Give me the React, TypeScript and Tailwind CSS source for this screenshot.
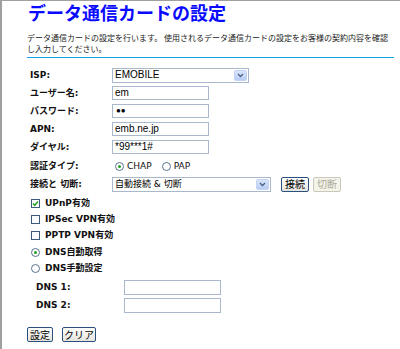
import React from "react";

const F = "font-['DejaVu_Sans','Noto_Sans_CJK_JP',sans-serif]";
const FA = "font-['Liberation_Sans','Noto_Sans_CJK_JP',sans-serif]";

function Label({ children, w = "w-[82px]" }: { children: React.ReactNode; w?: string }) {
  return <div className={`${w} shrink-0 font-bold text-[9px] leading-none text-[#111]`}>{children}</div>;
}

function TextBox({ value, w = "w-[97px]", h = "h-[14px]" }: { value?: React.ReactNode; w?: string; h?: string }) {
  return (
    <div className={`${w} ${h} border border-[#a9b8cc] bg-white pl-[2px] flex items-center text-[10px] leading-none text-black ${FA}`}>
      {value}
    </div>
  );
}

function Chevron() {
  return (
    <div className="absolute right-[1px] top-[1px] bottom-[1px] w-[13px] rounded-[2px] bg-[linear-gradient(#d8e4fb,#b9cdf4)] border border-[#c3d3f3] flex items-center justify-center">
      <svg width="7" height="5" viewBox="0 0 7 5">
        <path d="M1 1 L3.5 3.5 L6 1" fill="none" stroke="#4d6185" strokeWidth="1.3" />
      </svg>
    </div>
  );
}

function Select({ value, w, cls = "" }: { value: string; w: string; cls?: string }) {
  return (
    <div className={`relative ${w} h-[15px] border border-[#a9b8cc] bg-white pl-[2px] flex items-center leading-none text-black ${cls}`}>
      {value}
      <Chevron />
    </div>
  );
}

function Radio({ on }: { on?: boolean }) {
  return (
    <div className="w-[9px] h-[9px] rounded-full border border-[#5a7390] bg-white flex items-center justify-center shrink-0">
      {on && <div className="w-[3px] h-[3px] rounded-full bg-[#21a121]" />}
    </div>
  );
}

function Check({ on }: { on?: boolean }) {
  return (
    <div className="w-[9px] h-[9px] border border-[#3d5a7f] bg-white flex items-center justify-center shrink-0">
      {on && (
        <svg width="7" height="7" viewBox="0 0 7 7">
          <path d="M1 3.5 L2.8 5.3 L6 1.5" fill="none" stroke="#21a121" strokeWidth="1.5" />
        </svg>
      )}
    </div>
  );
}

function Btn({ children, w, disabled }: { children: React.ReactNode; w: string; disabled?: boolean }) {
  return (
    <div
      className={`${w} h-[15px] rounded-[2px] border flex items-center justify-center text-[10px] leading-none ${
        disabled
          ? "border-[#cac8bb] text-[#aca899] bg-[#f5f4ea]"
          : "border-[#2b4f7e] text-black bg-[linear-gradient(#ffffff,#e4e3dc)]"
      }`}
    >
      {children}
    </div>
  );
}

export default function App() {
  return (
    <div className={`w-[400px] h-[349px] bg-white border-l-2 border-t border-[#a0a0a0] pl-[25px] overflow-hidden ${F}`}>
      <div className="h-[22px] pl-[1px] text-[18px] leading-[22px] font-bold text-[#0a0aff] font-['Noto_Sans_CJK_JP',sans-serif]">
        データ通信カードの設定
      </div>
      <div className="mt-[9px] text-[8px] leading-[11px] text-[#222] font-['Noto_Sans_CJK_JP',sans-serif] whitespace-nowrap">
        データ通信カードの設定を行います。 使用されるデータ通信カードの設定をお客様の契約内容を確認
        <br />
        し入力してください。
      </div>
      <div className="mt-[3px] h-px w-[367px] bg-[#10a4e4]" />

      <div className="mt-[8px] pl-[3px] flex flex-col">
        <div className="h-[18px] flex items-center">
          <Label>ISP:</Label>
          <Select value="EMOBILE" w="w-[137px]" cls={`text-[10px] ${FA}`} />
        </div>
        <div className="h-[18px] flex items-center">
          <Label>ユーザー名:</Label>
          <TextBox value="em" />
        </div>
        <div className="h-[18px] flex items-center">
          <Label>パスワード:</Label>
          <TextBox value={<span className="text-[8px] tracking-[0px] pl-[1px]">●●</span>} />
        </div>
        <div className="h-[18px] flex items-center">
          <Label>APN:</Label>
          <TextBox value="emb.ne.jp" />
        </div>
        <div className="h-[18px] flex items-center">
          <Label>ダイヤル:</Label>
          <TextBox value="*99***1#" />
        </div>
        <div className="h-[20px] flex items-center">
          <Label>認証タイプ:</Label>
          <div className="flex items-center ml-[3px] text-[9px] leading-none text-[#111]">
            <Radio on />
            <span className="ml-[3px]">CHAP</span>
            <div className="ml-[10px]">
              <Radio />
            </div>
            <span className="ml-[3px]">PAP</span>
          </div>
        </div>
        <div className="h-[17px] flex items-center">
          <Label>接続と 切断:</Label>
          <Select value="自動接続 & 切断" w="w-[159px]" cls="text-[9px]" />
          <div className="ml-[10px]">
            <Btn w="w-[28px]">接続</Btn>
          </div>
          <div className="ml-[4px]">
            <Btn w="w-[28px]" disabled>
              切断
            </Btn>
          </div>
        </div>

        <div className="mt-[2px] pl-[1px] flex flex-col font-bold text-[9px] leading-none text-[#111]">
          <div className="h-[16px] flex items-center">
            <Check on />
            <span className="ml-[5px]">UPnP有効</span>
          </div>
          <div className="h-[16px] flex items-center">
            <Check />
            <span className="ml-[5px]">IPSec VPN有効</span>
          </div>
          <div className="h-[16px] flex items-center">
            <Check />
            <span className="ml-[5px]">PPTP VPN有効</span>
          </div>
          <div className="mt-[1px] h-[16px] flex items-center">
            <Radio on />
            <span className="ml-[5px]">DNS自動取得</span>
          </div>
          <div className="h-[16px] flex items-center">
            <Radio />
            <span className="ml-[5px]">DNS手動設定</span>
          </div>
        </div>

        <div className="mt-[2px] pl-[6px] flex flex-col">
          <div className="h-[18px] flex items-center">
            <Label w="w-[88px]">DNS 1:</Label>
            <TextBox w="w-[97px]" h="h-[15px]" />
          </div>
          <div className="h-[18px] flex items-center">
            <Label w="w-[88px]">DNS 2:</Label>
            <TextBox w="w-[97px]" h="h-[15px]" />
          </div>
        </div>

        <div className="mt-[13px] -ml-[3px] flex items-center font-['Noto_Sans_CJK_JP',sans-serif]">
          <Btn w="w-[26px]">設定</Btn>
          <div className="ml-[9px]">
            <Btn w="w-[34px]">クリア</Btn>
          </div>
        </div>
      </div>
    </div>
  );
}
